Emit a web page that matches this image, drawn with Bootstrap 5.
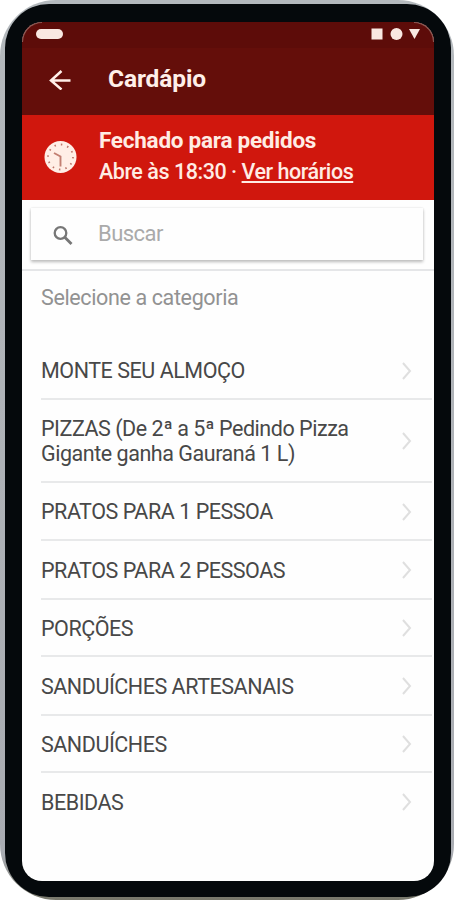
<!DOCTYPE html>
<html lang="pt-BR">
<head>
<meta charset="utf-8">
<meta name="viewport" content="width=device-width, initial-scale=1">
<title>Cardápio</title>
<link href="https://cdn.jsdelivr.net/npm/bootstrap@5.3.0/dist/css/bootstrap.min.css" rel="stylesheet">
<style>
body{font-family:Roboto,sans-serif;background:#fff;overflow:hidden}
.device{width:454px;height:900px;padding:4px 3px 3px 5px;border-radius:56px;background:linear-gradient(#b4b9bd 0,#a9acb2 95%,#77776a 100%)}
.bezel{background:#05090c;border-radius:44px;padding:18px 17px 16px}
.screen{background:#fefefe;border-radius:20px}
.screen::before,.screen::after{content:"";position:absolute;top:0;width:20px;height:20px;border-top:1px solid #91605a}
.screen::before{left:0;border-radius:20px 0 0 0;border-left:1px solid #91605a}
.screen::after{right:0;border-radius:0 20px 0 0;border-right:1px solid #91605a}
.statusbar{height:26px;background:#5d0c09;padding:0 14px 2px}
.pill{width:27px;height:10px;border-radius:5px;background:#f9e8e2}
.appbar{height:67px;background:#640e0a;color:#ffefe9;padding:0 27px 5px}
.appbar svg{margin-top:2px}
.appbar h1{font-size:24.5px;line-height:30px;margin-left:37px;font-weight:700;letter-spacing:-.1px}
.notice{height:85px;background:#d0170d;color:#ffece4;padding:0 22px;line-height:32px}
.notice-copy{margin:-3px 0 0 22px}
.notice strong,.notice span{white-space:nowrap;width:max-content}
.notice strong{font-size:22.5px;letter-spacing:-.25px}
.notice span{font-size:21.5px;font-weight:500;letter-spacing:-.46px}
.notice a{color:inherit;text-underline-offset:2px;text-decoration-thickness:2px}
.searchbox{height:69px;padding:8px 11px 9px 9px}
.searchfield{padding:0 21px 2px;color:#aaa;font-size:22px;letter-spacing:-.55px;box-shadow:0 2px 3px #bbb,0 0 2px #e4e4e4}
.searchfield svg{margin-top:3px}
.searchfield span{margin-left:24px}
.heading{height:73px;padding:12px 19px 0;border-top:2px solid #e5e6e8;color:#929292;font-size:21.5px;letter-spacing:-.37px;line-height:30px}
.choices{margin-left:19px;font-size:21.5px;letter-spacing:-.46px;line-height:25px;color:#484848}
.choice{height:58px;padding-top:1px;border-bottom:2px solid #e8e9ea;padding-right:20px;margin-right:2px;white-space:nowrap}
.choice.tall{height:83px}
.choice.short{height:57px}
.choice.roomy{height:59px}
.choice:last-child{border:0;padding-top:0}
</style>
<script src="https://cdn.jsdelivr.net/npm/bootstrap@5.3.0/dist/js/bootstrap.bundle.min.js"></script>
</head>
<body>
<svg class="d-none"><symbol id="chevron" viewBox="0 0 10 18"><path d="M1 1l7 8-7 8" fill="none" stroke="#dfdfdf" stroke-width="2"/></symbol></svg>
<div class="device d-flex">
<div class="bezel flex-fill d-flex">
<main class="screen position-relative flex-fill overflow-hidden d-flex flex-column">
<div class="statusbar d-flex align-items-center justify-content-between">
<div class="pill"></div>
<svg width="50" height="12" fill="#f9e8e2"><rect x="1.500" y=".5" width="11" height="11"/><circle cx="26.500" cy="6" r="6"/><path d="M39 1h11l-5.500 10z"/></svg>
</div>
<header class="appbar d-flex align-items-center">
<svg width="22" height="20" viewBox="0 0 22 20" fill="none" stroke="#ffefe9" stroke-width="2.500"><path d="M12.500 1L2 10.500l10.500 9M2 10.500h19.500"/></svg>
<h1 class="mb-0">Cardápio</h1>
</header>
<section class="notice d-flex align-items-center">
<svg width="33" height="33" viewBox="0 0 33 33"><circle cx="16.500" cy="16" r="16" fill="#ffeee6"/><circle cx="16.500" cy="16" r="12.500" fill="none" stroke="#bd766b" stroke-width="1.800" stroke-dasharray="1.500 5.045"/><path d="M10 12l6.500 3.500v10" fill="none" stroke="#c27f72" stroke-width="1.900"/></svg>
<div class="notice-copy d-flex flex-column">
<strong>Fechado para pedidos</strong>
<span>Abre às 18:30 · <a href="#">Ver horários</a></span>
</div>
</section>
<div class="searchbox d-flex">
<div class="searchfield flex-fill d-flex align-items-center">
<svg width="22" height="22" viewBox="0 0 22 22" fill="none" stroke="#777"><circle cx="8.500" cy="9" r="5.800" stroke-width="2.300"/><path d="M12.500 13l7 7" stroke-width="2.800"/></svg>
<span>Buscar</span>
</div>
</div>
<div class="heading">Selecione a categoria</div>
<div class="choices">
<div class="choice d-flex align-items-center justify-content-between"><span>MONTE SEU ALMOÇO</span><svg width="10" height="18"><use href="#chevron"/></svg></div>
<div class="choice tall d-flex align-items-center justify-content-between"><span>PIZZAS (De 2ª a 5ª Pedindo Pizza<br>Gigante ganha Gauraná 1 L)</span><svg width="10" height="18"><use href="#chevron"/></svg></div>
<div class="choice d-flex align-items-center justify-content-between"><span>PRATOS PARA 1 PESSOA</span><svg width="10" height="18"><use href="#chevron"/></svg></div>
<div class="choice roomy d-flex align-items-center justify-content-between"><span>PRATOS PARA 2 PESSOAS</span><svg width="10" height="18"><use href="#chevron"/></svg></div>
<div class="choice short d-flex align-items-center justify-content-between"><span>PORÇÕES</span><svg width="10" height="18"><use href="#chevron"/></svg></div>
<div class="choice roomy d-flex align-items-center justify-content-between"><span>SANDUÍCHES ARTESANAIS</span><svg width="10" height="18"><use href="#chevron"/></svg></div>
<div class="choice short d-flex align-items-center justify-content-between"><span>SANDUÍCHES</span><svg width="10" height="18"><use href="#chevron"/></svg></div>
<div class="choice d-flex align-items-center justify-content-between"><span>BEBIDAS</span><svg width="10" height="18"><use href="#chevron"/></svg></div>
</div>
</main>
</div>
</div>
</body>
</html>
